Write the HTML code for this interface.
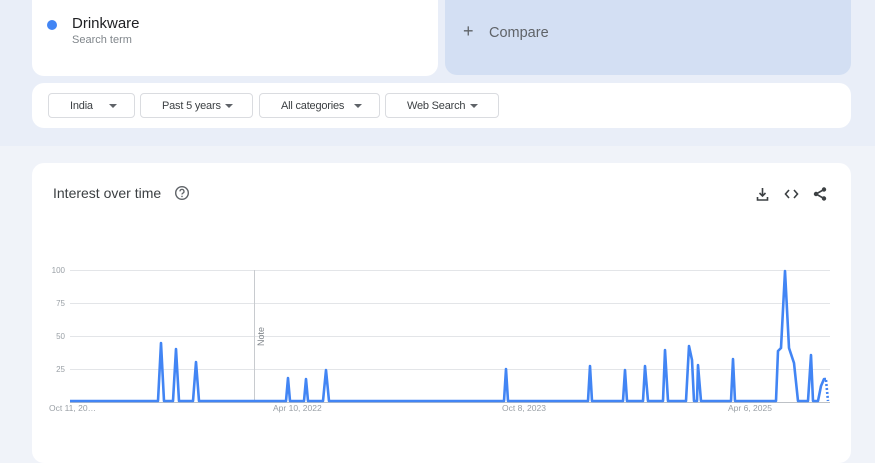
<!DOCTYPE html>
<html><head><meta charset="utf-8"><style>
*{margin:0;padding:0;box-sizing:border-box}
body{width:875px;height:438px;overflow:hidden;background:#f0f3f9;font-family:"Liberation Sans",Arial,sans-serif;position:relative}
.top{position:absolute;left:0;top:0;width:875px;height:146px;background:#e9eef8}
.card{position:absolute;background:#fff;border-radius:12px}
.dd{position:absolute;top:93px;height:25px;border:1px solid #dadce0;border-radius:4px;background:#fff;font-size:11px;letter-spacing:-0.2px;color:#3c4043;line-height:25px}
.dd i{position:absolute;top:10px;width:0;height:0;border-left:4px solid transparent;border-right:4px solid transparent;border-top:4px solid #5f6368}
.yl{position:absolute;font-size:8px;color:#9aa0a6;right:810px}
.xl{position:absolute;top:403px;font-size:8.5px;color:#9aa0a6}
</style></head><body>
<div class="top"></div>
<div class="card" style="left:32px;top:-12px;width:406px;height:88px"></div>
<div style="position:absolute;left:47px;top:20px;width:10px;height:10px;border-radius:50%;background:#4285f4"></div>
<div style="position:absolute;left:72px;top:15px;font-size:15px;color:#202124">Drinkware</div>
<div style="position:absolute;left:72px;top:34px;font-size:11px;color:#80868b">Search term</div>
<div style="position:absolute;left:445px;top:-12px;width:406px;height:87px;background:#d3dff3;border-radius:12px"></div>
<div style="position:absolute;left:463px;top:21px;font-size:18px;color:#5f6368">+</div>
<div style="position:absolute;left:489px;top:25px;font-size:14.5px;color:#5f6368">Compare</div>
<div class="card" style="left:32px;top:83px;width:819px;height:45px"></div>
<div class="dd" style="left:48px;width:87px"><span style="position:absolute;left:21px">India</span><i style="left:60px"></i></div>
<div class="dd" style="left:140px;width:113px"><span style="position:absolute;left:21px">Past 5 years</span><i style="left:84px"></i></div>
<div class="dd" style="left:259px;width:121px"><span style="position:absolute;left:21px">All categories</span><i style="left:94px"></i></div>
<div class="dd" style="left:385px;width:114px"><span style="position:absolute;left:21px">Web Search</span><i style="left:84px"></i></div>
<div class="card" style="left:32px;top:163px;width:819px;height:300px"></div>
<div style="position:absolute;left:53px;top:185px;font-size:14px;color:#3c4043">Interest over time</div>
<svg style="position:absolute;left:174px;top:185px" width="16" height="16" viewBox="0 0 16 16"><circle cx="8" cy="8" r="6.3" fill="none" stroke="#5f6368" stroke-width="1.4"/><path d="M6 6.4a2 2 0 1 1 2.8 1.8c-.6.3-.8.7-.8 1.3" fill="none" stroke="#5f6368" stroke-width="1.3"/><circle cx="8" cy="11.4" r=".8" fill="#5f6368"/></svg>
<svg style="position:absolute;left:755px;top:186px" width="75" height="16" viewBox="0 0 75 16">
<g fill="none" stroke="#3c4043" stroke-width="1.6"><path d="M7.5 2v8M4.5 7l3 3 3-3M2.5 11v3h10v-3"/><path d="M34 4l-3.5 4 3.5 4M39 4l3.5 4-3.5 4"/><path d="M69 3.5l-8 4.5 8 4.5"/></g>
<g fill="#3c4043"><circle cx="69" cy="3.5" r="2.2"/><circle cx="61" cy="8" r="2.2"/><circle cx="69" cy="12.5" r="2.2"/></g></svg>
<svg style="position:absolute;left:0;top:0" width="875" height="438">
<g stroke="#e3e5e8" stroke-width="1"><line x1="70" y1="270.5" x2="830" y2="270.5"/><line x1="70" y1="303.5" x2="830" y2="303.5"/><line x1="70" y1="336.5" x2="830" y2="336.5"/><line x1="70" y1="369.5" x2="830" y2="369.5"/></g>
<line x1="70" y1="402.5" x2="830" y2="402.5" stroke="#bdc1c6"/>
<line x1="254.5" y1="270" x2="254.5" y2="402" stroke="#c8cbcf"/>
<text x="0" y="0" transform="translate(264,346) rotate(-90)" font-size="9" fill="#80868b" font-family="Liberation Sans">Note</text>
<polyline fill="none" stroke="#4285f4" stroke-width="2.6" stroke-linejoin="round" points="70,401 158,401 161,343 164,401 173,401 176,349 179,401 193,401 196,362 199,401 286,401 288,378 290,401 304,401 306,379 308,401 323,401 326,370 329,401 504,401 506,369 508,401 588,401 590,366 592,401 623,401 625,370 627,401 643,401 645,366 648,401 663,401 665,350 668,401 686,401 689,346 692,360 694,401 697,401 698,365 701,401 731,401 733,359 735,401 776,401 778,351 781,348 785,271 789,348 794,363 798,401 808,401 811,355 813,401 818,401 821,386 824,379 826,379"/>
<polyline fill="none" stroke="#4285f4" stroke-width="2.6" stroke-dasharray="2 2" points="826,380 828,401"/>
</svg>
<div class="yl" style="top:266px">100</div>
<div class="yl" style="top:299px">75</div>
<div class="yl" style="top:332px">50</div>
<div class="yl" style="top:365px">25</div>
<div class="xl" style="left:49px">Oct 11, 20…</div>
<div class="xl" style="left:273px">Apr 10, 2022</div>
<div class="xl" style="left:502px">Oct 8, 2023</div>
<div class="xl" style="left:728px">Apr 6, 2025</div>
</body></html>
